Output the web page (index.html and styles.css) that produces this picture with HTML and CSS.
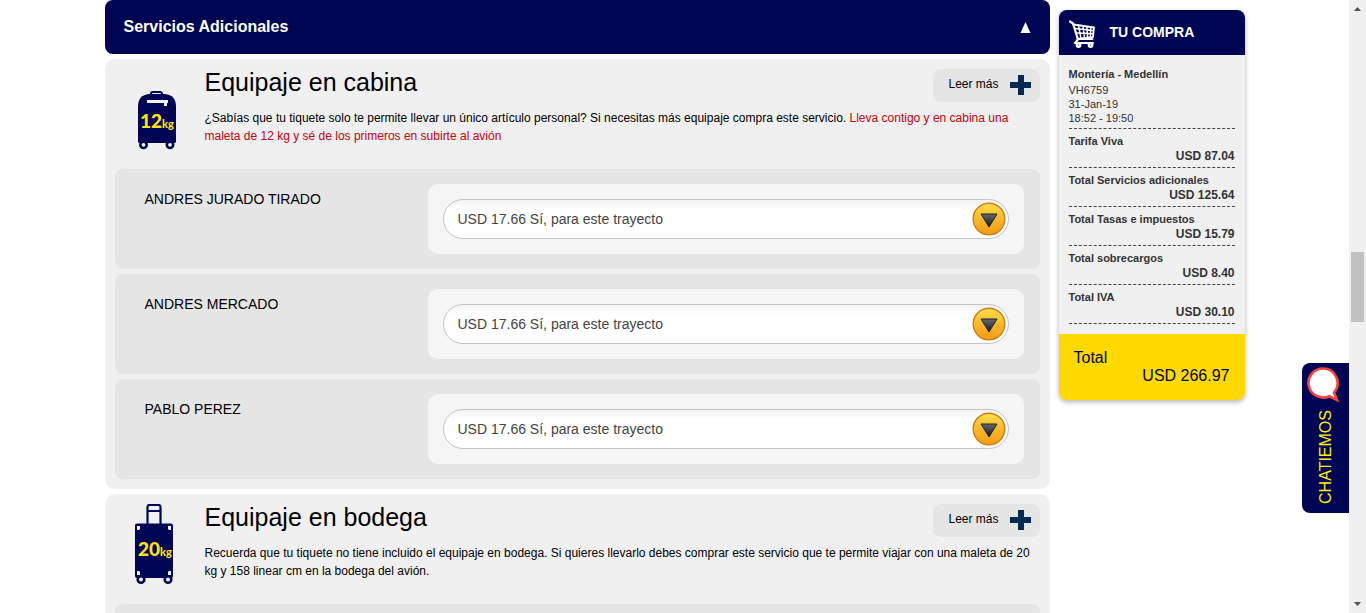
FILE: index.html
```html
<!DOCTYPE html>
<html lang="es">
<head>
<meta charset="utf-8">
<title>Servicios Adicionales</title>
<link rel="stylesheet" href="styles.css">
</head>
<body>
<svg class="defs" width="0" height="0" aria-hidden="true">
  <defs>
    <linearGradient id="gold" x1="0" y1="0" x2="0" y2="1"><stop offset="0" stop-color="#fbe04a"/><stop offset=".5" stop-color="#f9b82a"/><stop offset="1" stop-color="#f49a14"/></linearGradient>
    <linearGradient id="coal" x1="0" y1="0" x2="0" y2="1"><stop offset="0" stop-color="#6a6a6a"/><stop offset="1" stop-color="#0c1620"/></linearGradient>
    <symbol id="knob" viewBox="0 0 34 34"><circle cx="17" cy="17" r="15.800" fill="url(#gold)" stroke="#cf7c14" stroke-width="1.400"/><path d="M9 12h16l-8 13z" fill="url(#coal)" stroke="#1b2228" stroke-width="1"/></symbol>
    <symbol id="plus" viewBox="0 0 22 22"><path d="M8 1h6v7h7v6h-7v7H8v-7H0V8h8z" fill="#002a54"/></symbol>
  </defs>
</svg>
<div class="window">
  <div class="viewport">
    <div class="page">
      <main class="services">
        <button class="section-bar" type="button" aria-expanded="true">
          <span>Servicios Adicionales</span>
          <svg width="11" height="11" viewBox="0 0 11 11" aria-hidden="true"><path d="M5.500 0L10.500 11H.5z" fill="#fff"/></svg>
        </button>

        <section class="card">
          <div class="card-head">
            <svg class="bag" width="40" height="82" viewBox="0 0 40 82" aria-hidden="true">
              <path d="M14 26v-1q0-2 2-2h7q2 0 2 2v1" fill="none" stroke="#000553" stroke-width="2"/>
              <path d="M1 73V38q0-12 11-13h16q11 1 11 13v35q0 1-2 1H3q-2 0-2-1z" fill="#000553"/>
              <path d="M10 31h21v3h-1v3h-3v-3H10z" fill="#f0f0f0"/>
              <circle cx="6.500" cy="75.800" r="3.200" fill="#f0f0f0" stroke="#000553" stroke-width="2.600"/>
              <circle cx="33" cy="75.800" r="3.200" fill="#f0f0f0" stroke="#000553" stroke-width="2.600"/>
              <text class="bag-label" x="3" y="59"><tspan class="bag-number">12</tspan><tspan class="bag-unit">kg</tspan></text>
            </svg>
            <div class="intro">
              <div class="title-row">
                <h2>Equipaje en cabina</h2>
                <button class="more" type="button"><span>Leer más</span><svg width="22" height="22" aria-hidden="true"><use href="#plus"/></svg></button>
              </div>
              <p>¿Sabías que tu tiquete solo te permite llevar un único artículo personal? Si necesitas más equipaje compra este servicio. <span class="alert">Lleva contigo y en cabina una maleta de 12 kg y sé de los primeros en subirte al avión</span></p>
            </div>
          </div>
          <div class="rows">
            <div class="row">
              <label for="bag1">ANDRES JURADO TIRADO</label>
              <div class="panel"><div class="picker"><select id="bag1"><option>USD 17.66 Sí, para este trayecto</option></select><svg width="34" height="34" aria-hidden="true"><use href="#knob"/></svg></div></div>
            </div>
            <div class="row">
              <label for="bag2">ANDRES MERCADO</label>
              <div class="panel"><div class="picker"><select id="bag2"><option>USD 17.66 Sí, para este trayecto</option></select><svg width="34" height="34" aria-hidden="true"><use href="#knob"/></svg></div></div>
            </div>
            <div class="row">
              <label for="bag3">PABLO PEREZ</label>
              <div class="panel"><div class="picker"><select id="bag3"><option>USD 17.66 Sí, para este trayecto</option></select><svg width="34" height="34" aria-hidden="true"><use href="#knob"/></svg></div></div>
            </div>
          </div>
        </section>

        <section class="card">
          <div class="card-head">
            <svg class="bag bag-hold" width="40" height="82" viewBox="0 0 40 82" aria-hidden="true">
              <path d="M13.500 20V3q0-2 2-2h9q2 0 2 2v17M14 7h12.500" fill="none" stroke="#000553" stroke-width="2.200"/>
              <rect x="1" y="19.500" width="38" height="54.500" rx="2" fill="#000553"/>
              <g fill="#f0f0f0"><path d="M3 22h3v3l-1 1H3zM37 22h-3v3l1 1h2zM3 71h3v-3l-1-1H3zM37 71h-3v-3l1-1h2z"/></g>
              <circle cx="7" cy="75.500" r="3.300" fill="#f0f0f0" stroke="#000553" stroke-width="2.600"/>
              <circle cx="34" cy="75.500" r="3.300" fill="#f0f0f0" stroke="#000553" stroke-width="2.600"/>
              <text class="bag-label" x="4" y="52"><tspan class="bag-number">20</tspan><tspan class="bag-unit">kg</tspan></text>
            </svg>
            <div class="intro">
              <div class="title-row">
                <h2>Equipaje en bodega</h2>
                <button class="more" type="button"><span>Leer más</span><svg width="22" height="22" aria-hidden="true"><use href="#plus"/></svg></button>
              </div>
              <p>Recuerda que tu tiquete no tiene incluido el equipaje en bodega. Si quieres llevarlo debes comprar este servicio que te permite viajar con una maleta de 20 kg y 158 linear cm en la bodega del avión.</p>
            </div>
          </div>
          <div class="rows"><div class="row"><div class="panel"></div></div></div>
        </section>
      </main>

      <aside class="summary">
        <h2 class="summary-title">
          <svg width="28" height="28" viewBox="0 0 28 28" aria-hidden="true"><g fill="none" stroke="#fff" stroke-linecap="round" stroke-linejoin="round"><path d="M1 1.500l3 2 5 16-3 3.500h18" stroke-width="2.200"/><path d="M4.500 4.500l20.500 3-1 9.500-15.500 2h15" stroke-width="1.800"/><path d="M6 8.500l18.500 2M7.500 13l16.500.7M9.500 5.500l2.500 13M14 6l1.500 12M18 7l.5 11M21.800 7.500l-.5 10" stroke-width="1.400"/></g><g fill="#000553" stroke="#fff" stroke-width="2.400"><circle cx="9.500" cy="25" r="1.700"/><circle cx="21.500" cy="25" r="1.700"/></g></svg>
          <span>TU COMPRA</span>
        </h2>
        <div class="summary-body">
          <div class="flight"><h3>Montería - Medellín</h3><p>VH6759</p><p>31-Jan-19</p><p>18:52 - 19:50</p></div>
          <dl>
            <div class="charge"><dt>Tarifa Viva</dt><dd>USD 87.04</dd></div>
            <div class="charge"><dt>Total Servicios adicionales</dt><dd>USD 125.64</dd></div>
            <div class="charge"><dt>Total Tasas e impuestos</dt><dd>USD 15.79</dd></div>
            <div class="charge"><dt>Total sobrecargos</dt><dd>USD 8.40</dd></div>
            <div class="charge"><dt>Total IVA</dt><dd>USD 30.10</dd></div>
          </dl>
        </div>
        <div class="total"><span>Total</span><strong>USD 266.97</strong></div>
      </aside>
    </div>
    <button class="chat" type="button">
      <svg width="34" height="36" viewBox="0 0 34 36" aria-hidden="true"><path d="M17 2.500a14.500 14.500 0 1 0 6 27.700l8 3.800-3-7.500A14.500 14.500 0 0 0 17 2.500z" fill="#fff" stroke="#fb4242" stroke-width="2.600"/></svg>
      <span>CHATIEMOS</span>
    </button>
  </div>
  <div class="scrollbar" aria-hidden="true">
    <svg width="17" height="17"><path d="M5 11h7L8.500 7z" fill="#505050"/></svg>
    <div class="track"><div class="thumb"></div></div>
    <svg width="17" height="17"><path d="M5 6h7L8.500 10z" fill="#505050"/></svg>
  </div>
</div>
</body>
</html>
```
FILE: styles.css
```css
* { box-sizing: border-box; }
body, h2, h3, p, dl, dd { margin: 0; }
body { font-family: "Liberation Sans", Arial, sans-serif; color: #000; background: #fff; }
button, select { font: inherit; }
button { border: 0; cursor: pointer; }
.defs { position: absolute; }

.window { display: flex; height: 100vh; overflow: hidden; }
.viewport { flex: 1; min-width: 0; position: relative; overflow: hidden; }
.page {
  display: grid;
  grid-template-columns: minmax(0, 1fr) 186px;
  align-items: start;
  gap: 9px;
  max-width: 1140px;
  margin: 0 auto;
}

.services { display: flex; flex-direction: column; gap: 5px; }
.section-bar {
  display: flex;
  align-items: center;
  justify-content: space-between;
  height: 54px;
  padding: 0 19px;
  border-radius: 8px;
  background: #000553;
  color: #fff;
  font-size: 16px;
  font-weight: bold;
}

.card { padding: 10px; border-radius: 10px; background: #f0f0f0; }
.card-head { display: flex; min-height: 100px; padding-left: 22px; }
.bag { flex: none; }
.bag-hold { margin-left: -3px; margin-right: 3px; }
.bag-label { fill: #ffe11a; font-family: Lato, sans-serif; font-weight: 900; }
.bag-number { font-size: 19px; }
.bag-unit { font-size: 11px; }
.intro { flex: 1; min-width: 0; margin-left: 28px; }
.title-row { display: flex; justify-content: space-between; }
.title-row h2 { font-size: 25px; font-weight: normal; line-height: 26px; }
.more {
  display: flex;
  align-items: center;
  gap: 11px;
  height: 33px;
  padding: 0 8px 2px 15px;
  border-radius: 8px;
  background: #e5e5e5;
  color: #000;
  font-size: 12px;
}
.more span { line-height: 18px; padding-bottom: 2px; }
.intro p { margin-top: 7px; padding-right: 5px; font-size: 12px; line-height: 18px; }
.alert { color: #c8000c; }

.rows { display: flex; flex-direction: column; gap: 5px; }
.row {
  display: grid;
  grid-template-columns: 283px minmax(0, 1fr);
  min-height: 100px;
  padding: 15px 16px 15px 30px;
  border-radius: 8px;
  background: #e5e5e5;
}
.row label { font-size: 14px; line-height: 30px; }
.panel { padding: 15px; border-radius: 10px; background: #f5f5f5; }
.picker { position: relative; }
.picker select {
  display: block;
  width: 100%;
  height: 40px;
  padding: 0 44px 0 14px;
  border: 1px solid #c4c4c4;
  border-radius: 20px;
  appearance: none;
  background: linear-gradient(#f2f2f2, #fff 9px);
  color: #444;
  font-size: 14px;
}
.picker svg { position: absolute; top: 3px; right: 3px; pointer-events: none; }

.summary { margin-top: 10px; border-radius: 8px; overflow: hidden; background: #f0f0f0; box-shadow: 0 2px 5px rgba(0, 0, 0, .3); color: #333; }
.summary-title {
  display: flex;
  align-items: center;
  gap: 13px;
  height: 45px;
  padding: 2px 10px 0;
  background: #000553;
  color: #fff;
  font-size: 14px;
}
.summary-title span { padding-bottom: 4px; }
.summary-body { padding: 11px 10px 10px; }
.flight { padding-bottom: 3px; border-bottom: 1px dashed #444; font-size: 11px; line-height: 14px; }
.flight h3 { margin-bottom: 1px; font-size: 11px; line-height: 16px; }
.charge { padding: 5px 0 4px; border-bottom: 1px dashed #444; font-weight: bold; }
.charge dt { font-size: 11px; line-height: 15px; }
.charge dd { font-size: 12px; line-height: 14px; text-align: right; }
.total { padding: 15px; background: #ffd900; color: #000533; font-size: 16px; line-height: 18px; }
.total strong { display: block; font-weight: normal; text-align: right; }

.chat {
  position: absolute;
  right: 0;
  top: 363px;
  display: flex;
  flex-direction: column;
  align-items: center;
  gap: 8px;
  width: 47px;
  height: 150px;
  padding: 3px 4px;
  border-radius: 8px 0 0 8px;
  background: #000553;
}
.chat svg { flex: none; align-self: flex-start; }
.chat span {
  writing-mode: vertical-rl;
  transform: rotate(180deg);
  color: #ffee00;
  font-family: "Liberation Sans Narrow", "Liberation Sans", sans-serif;
  font-size: 16px;
  line-height: 26px;
}

.scrollbar { display: flex; flex-direction: column; flex: none; width: 17px; background: #f0f0f0; }
.track { flex: 1; display: flex; flex-direction: column; padding: 0 2px; }
.track::before { content: ""; flex: 235; }
.track::after { content: ""; flex: 274; }
.thumb { flex: 70; background: #c1c1c1; }
```
